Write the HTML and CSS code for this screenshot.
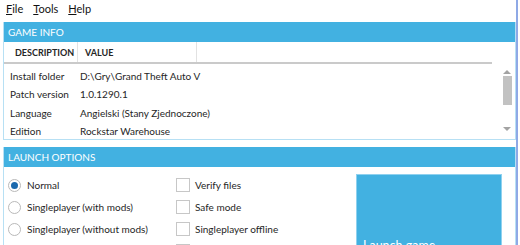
FILE: index.html
```html
<!DOCTYPE html>
<html lang="en">

<head>
    <meta charset="UTF-8">
    <title>Launcher</title>
    <link rel="stylesheet" href="styles.css">
</head>

<body>
    <div class="window">
        <div class="menubar">
            <span class="menu"><u>F</u>ile</span>
            <span class="menu"><u>T</u>ools</span>
            <span class="menu"><u>H</u>elp</span>
        </div>

        <div class="panel info">
            <div class="panel-title">GAME INFO</div>
            <div class="info-body">
                <div class="grid">
                    <div class="grid-head">
                        <div class="col col-desc">DESCRIPTION</div>
                        <div class="col col-value">VALUE</div>
                        <div class="col col-rest"></div>
                    </div>
                    <div class="row"><span class="cell-desc">Install folder</span><span>D:\Gry\Grand Theft Auto V</span></div>
                    <div class="row"><span class="cell-desc">Patch version</span><span>1.0.1290.1</span></div>
                    <div class="row"><span class="cell-desc">Language</span><span>Angielski (Stany Zjednoczone)</span></div>
                    <div class="row"><span class="cell-desc">Edition</span><span>Rockstar Warehouse</span></div>
                </div>
                <div class="scrollbar">
                    <span class="arrow up"></span>
                    <span class="thumb"></span>
                    <span class="arrow down"></span>
                </div>
            </div>
        </div>

        <div class="panel launch">
            <div class="panel-title">LAUNCH OPTIONS</div>
            <div class="launch-body">
                <div class="options">
                    <label class="opt"><span class="radio checked"></span>Normal</label>
                    <label class="opt"><span class="radio"></span>Singleplayer (with mods)</label>
                    <label class="opt"><span class="radio"></span>Singleplayer (without mods)</label>
                    <label class="opt"><span class="radio"></span></label>
                </div>
                <div class="options checks">
                    <label class="opt"><span class="check"></span>Verify files</label>
                    <label class="opt"><span class="check"></span>Safe mode</label>
                    <label class="opt"><span class="check"></span>Singleplayer offline</label>
                    <label class="opt"><span class="check"></span></label>
                </div>
                <button class="launch-btn">Launch game</button>
            </div>
        </div>
    </div>
</body>

</html>
```

FILE: styles.css
```css
html,
body {
    margin: 0;
    width: 520px;
    height: 245px;
    overflow: hidden;
    background-color: #fff;
}

body {
    font-family: Lato, "Open Sans", sans-serif;
    font-size: 10px;
    color: #262626;
}

.window {
    height: 245px;
    padding-left: 3px;
    margin-right: 1px;
    width: 513px;
    border-right: 2px solid #8fa9e6;
    box-sizing: content-box;
}

.menubar {
    display: flex;
    gap: 10px;
    height: 22px;
    padding-left: 3px;
    font-size: 11px;
    line-height: 18px;
    color: #111;
}

.panel {
    border: 1px solid #b7e0f4;
    border-top: none;
}

.panel-title {
    background-color: #42b1e1;
    color: #fff;
    height: 20px;
    line-height: 20px;
    padding-left: 4px;
    font-size: 10px;
}

.info-body {
    display: flex;
    height: 97px;
}

.grid {
    flex: 1;
}

.grid-head {
    display: flex;
    height: 20px;
    border-bottom: 2px solid #cacaca;
    margin-right: 10px;
    font-weight: bold;
    font-size: 9px;
    line-height: 21px;
}

.col {
    border-right: 1px solid #e2e2e2;
}

.col-desc {
    width: 62px;
    padding-left: 11px;
}

.col-value {
    width: 111px;
    padding-left: 7px;
}

.col-rest {
    flex: 1;
    border-right: none;
}

.row {
    display: flex;
    height: 18.3px;
    line-height: 18px;
    padding-left: 6px;
}

.grid-head + .row {
    margin-top: 3px;
}

.cell-desc {
    width: 70px;
}

.scrollbar {
    width: 10px;
    margin-right: 3px;
    display: flex;
    flex-direction: column;
    align-items: center;
    padding-top: 28px;
}

.arrow {
    width: 0;
    height: 0;
    border-left: 4px solid transparent;
    border-right: 4px solid transparent;
}

.arrow.up {
    border-bottom: 4px solid #a3a3a3;
}

.arrow.down {
    border-top: 4px solid #a3a3a3;
    margin-top: 22px;
}

.thumb {
    width: 9px;
    height: 29px;
    margin-top: 2px;
    background-color: #c2c2c2;
}

.panel.launch {
    margin-top: 7px;
}

.launch-body {
    display: flex;
    padding-top: 7px;
    height: 80px;
}

.options {
    display: flex;
    flex-direction: column;
    flex-shrink: 0;
    box-sizing: border-box;
    width: 172px;
    padding-left: 4px;
}

.opt {
    display: flex;
    flex-shrink: 0;
    align-items: center;
    gap: 6px;
    height: 22px;
}

.radio {
    width: 11px;
    height: 11px;
    border: 1px solid #b9b9b9;
    border-radius: 50%;
    display: flex;
    align-items: center;
    justify-content: center;
}

.radio.checked::after {
    content: "";
    width: 7px;
    height: 7px;
    border-radius: 50%;
    background-color: #1b69ad;
}

.checks {
    width: 180px;
    padding-left: 0;
}

.check {
    width: 12px;
    height: 12px;
    border: 1px solid #c7c7c7;
    margin-right: -1px;
}

.launch-btn {
    flex-shrink: 0;
    width: 146px;
    height: 90px;
    background-color: #42b1e1;
    border: 1px solid #8fd1ef;
    color: #fff;
    font-family: Lato, "Open Sans", sans-serif;
    font-size: 12.5px;
    text-align: left;
    padding: 52px 0 0 6px;
}
```
